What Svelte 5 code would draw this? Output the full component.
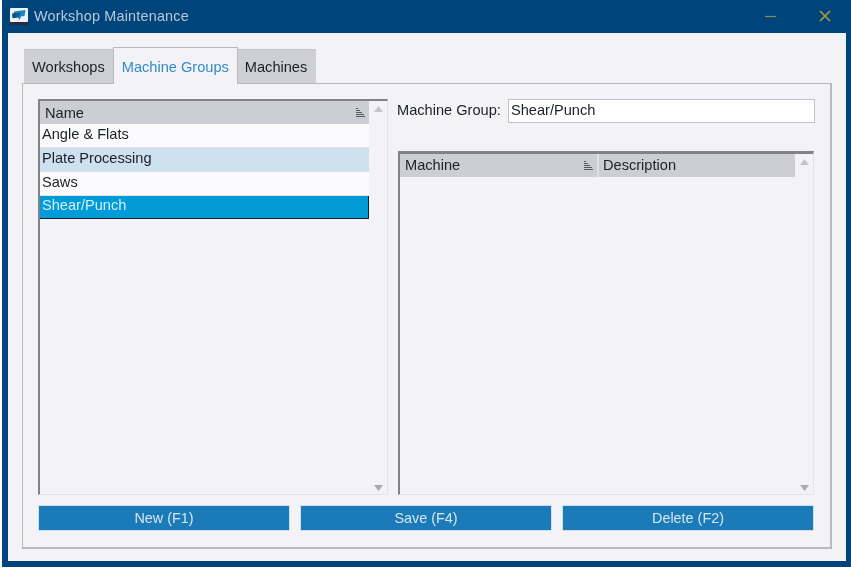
<script>
  const rows = [
    { name: 'Angle & Flats', kind: '' },
    { name: 'Plate Processing', kind: 'alt' },
    { name: 'Saws', kind: '' },
    { name: 'Shear/Punch', kind: 'selected' }
  ];
  const actions = ['New (F1)', 'Save (F4)', 'Delete (F2)'];
</script>

{#snippet sortIcon()}
  <svg class="sort" width="9" height="9" viewBox="0 0 9 9" aria-hidden="true">
    <path d="M0 0.5h2M0 2.5h4M0 4.5h6M0 6.5h8M0 8.5h9" stroke="#55595e" stroke-width="1" fill="none" />
  </svg>
{/snippet}

{#snippet scrollbar()}
  <div class="scrollbar">
    <svg width="9" height="6" viewBox="0 0 9 6" aria-hidden="true"><path d="M4.5 0L9 6H0z" fill="#c3c5ca" /></svg>
    <svg width="9" height="6" viewBox="0 0 9 6" aria-hidden="true"><path d="M0 0H9L4.5 6z" fill="#a9abb0" /></svg>
  </div>
{/snippet}

<div class="window">
  <header class="titlebar">
    <div class="title-left">
      <svg class="logo" width="18" height="17" viewBox="0 0 18 17" aria-hidden="true">
        <rect x="0" y="0" width="18" height="14" rx="1" fill="#eef3f7" />
        <rect x="0" y="14" width="18" height="3" fill="#2a2c3c" />
        <path d="M4 3.500L15.500 2L14.500 8L11 8.500L9.500 12L8 9.500L4 10Z" fill="#1f86c4" />
        <path d="M2 5.500L6 5L5.800 9.800L2.500 10.200Z" fill="#0b4c84" />
        <path d="M6 5L11 4.300L9 9L5.800 9.800Z" fill="#0f6299" />
      </svg>
      <span class="title">Workshop Maintenance</span>
    </div>
    <div class="controls">
      <svg width="12" height="12" viewBox="0 0 12 12" aria-hidden="true"><path d="M0 6.500H11" stroke="#8a8a55" stroke-width="1.300" /></svg>
      <svg width="12" height="12" viewBox="0 0 12 12" aria-hidden="true"><path d="M1 1L11 11M11 1L1 11" stroke="#a89b3c" stroke-width="1.700" /></svg>
    </div>
  </header>

  <main class="client">
    <nav class="tabs">
      <div class="tab">Workshops</div>
      <div class="tab active">Machine Groups</div>
      <div class="tab last">Machines</div>
    </nav>

    <section class="panel">
      <div class="columns">
        <div class="grid left-grid">
          <div class="grid-main">
            <div class="head">
              <div class="head-cell name-cell"><span>Name</span>{@render sortIcon()}</div>
            </div>
            {#each rows as row}
              <div class="row {row.kind}">{row.name}</div>
            {/each}
          </div>
          {@render scrollbar()}
        </div>

        <div class="right">
          <label class="field">
            <span>Machine Group:</span>
            <input type="text" value="Shear/Punch" />
          </label>
          <div class="grid right-grid">
            <div class="grid-main">
              <div class="head">
                <div class="head-cell machine-cell"><span>Machine</span>{@render sortIcon()}</div>
                <div class="head-cell desc-cell"><span>Description</span></div>
              </div>
            </div>
            {@render scrollbar()}
          </div>
        </div>
      </div>

      <div class="actions">
        {#each actions as action}
          <button type="button">{action}</button>
        {/each}
      </div>
    </section>
  </main>
</div>

<style>
  :global(html), :global(body) {
    margin: 0;
    background: #fff;
  }
  .window {
    box-sizing: border-box;
    width: 849px;
    height: 567px;
    margin-left: 2px;
    display: flex;
    flex-direction: column;
    padding: 0 5px 6px 6px;
    background: #00447c;
    font-family: "Liberation Sans", Arial, sans-serif;
    font-size: 14.6px;
    color: #1b1f27;
    filter: blur(0.35px);
  }
  .titlebar {
    height: 33px;
    flex: none;
    display: flex;
    align-items: center;
    justify-content: space-between;
  }
  .title-left {
    display: flex;
    align-items: center;
    gap: 6px;
    padding: 0 0 1px 2px;
  }
  .logo { display: block; }
  .title {
    color: #b9c9d8;
    font-size: 14.4px;
    letter-spacing: 0.2px;
    padding-bottom: 1px;
  }
  .controls {
    display: flex;
    gap: 42px;
    padding: 0 15px 2px 0;
  }
  .controls svg { display: block; }
  .client {
    flex: 1;
    min-height: 0;
    display: flex;
    flex-direction: column;
    padding: 14px 14px 12px 14px;
    background: #f2f2f7;
  }
  .tabs {
    display: flex;
    padding-left: 2px;
    height: 36px;
    flex: none;
    align-items: flex-end;
    position: relative;
    z-index: 1;
  }
  .tab {
    box-sizing: border-box;
    height: 34px;
    padding: 9px 8px 0;
    background: #cfd0d5;
    border-top: 1px solid #c2c3c7;
  }
  .tab.last { padding: 9px 9px 0 7px; }
  .tab.active {
    height: 37px;
    margin-bottom: -1px;
    padding: 11px 8px 0;
    background: #f2f2f7;
    border: 1px solid #b9babd;
    border-bottom: none;
    color: #2f8cc8;
  }
  .panel {
    flex: 1;
    min-height: 0;
    display: flex;
    flex-direction: column;
    gap: 10px;
    padding: 15px 16px 16px 15px;
    border: 1px solid #b9babd;
    border-bottom-width: 2px;
    border-right-width: 2px;
  }
  .columns {
    flex: 1;
    min-height: 0;
    display: flex;
    gap: 10px;
  }
  .grid {
    box-sizing: border-box;
    display: flex;
    border-top: 2px solid #808285;
    border-left: 2px solid #808285;
    border-right: 1px solid #e3e3e8;
    border-bottom: 1px solid #e3e3e8;
  }
  .left-grid {
    width: 350px;
    flex: none;
  }
  .grid-main {
    flex: 1;
    min-width: 0;
  }
  .head {
    display: flex;
    height: 23px;
    background: #cdced3;
  }
  .head-cell {
    box-sizing: border-box;
    display: flex;
    align-items: center;
    justify-content: space-between;
    padding: 0 4px 0 5px;
  }
  .name-cell { flex: 1; }
  .machine-cell {
    width: 199px;
    border-right: 2px solid #e0e0e6;
  }
  .right-grid .head-cell span { padding-bottom: 2px; }
  .desc-cell { flex: 1; padding-left: 4px; }
  .sort { display: block; }
  .row {
    box-sizing: border-box;
    height: 24px;
    padding: 0 2px 4px;
    display: flex;
    align-items: center;
    background: #fbfbfd;
    border-bottom: 1px solid #e4e5ea;
  }
  .row.alt { background: #cfe1ef; border-bottom-color: #cfe1ef; }
  .row.selected {
    height: 23px;
    padding-bottom: 4px;
    background: #019bd8;
    color: #d6eef9;
    border: 1px solid #10202c;
    border-top: none;
    border-left: none;
  }
  .scrollbar {
    width: 18px;
    flex: none;
    display: flex;
    flex-direction: column;
    align-items: center;
    justify-content: space-between;
    padding: 5px 0 3px;
    box-sizing: border-box;
  }
  .scrollbar svg { display: block; }
  .right {
    flex: 1;
    min-width: 0;
    display: flex;
    flex-direction: column;
    gap: 28px;
  }
  .field {
    display: flex;
    align-items: center;
    justify-content: space-between;
    height: 24px;
    margin-left: -1px;
    margin-right: -1px;
    flex: none;
  }
  .field span { padding-bottom: 2px; }
  .field input {
    box-sizing: border-box;
    width: 307px;
    height: 24px;
    border: 1px solid #c2c3c7;
    background: #fff;
    padding: 0 2px 2px;
    font: inherit;
    color: #1b1f27;
    outline: none;
  }
  .right-grid {
    flex: 1;
    min-height: 0;
    border-top-width: 3px;
  }
  .actions {
    flex: none;
    display: flex;
    gap: 10px;
  }
  .actions button {
    flex: 1;
    height: 26px;
    border: none;
    padding: 0;
    background: #1a7bb8;
    box-shadow: 0 0 0 1px #cfe0ec inset;
    color: #d6e6f1;
    font: inherit;
    font-size: 14.4px;
  }
</style>
